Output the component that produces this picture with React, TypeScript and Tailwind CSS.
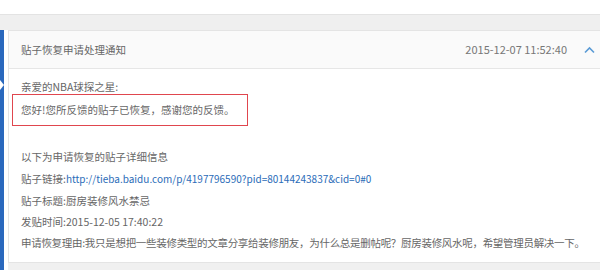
const lines = [
  { label: '贴子标题:', value: '厨房装修风水禁忌' },
  { label: '发贴时间:', value: '2015-12-05 17:40:22' },
  {
    label: '申请恢复理由:',
    value: '我只是想把一些装修类型的文章分享给装修朋友，为什么总是删帖呢？厨房装修风水呢，希望管理员解决一下。',
  },
];

const App = () => {
  return (
    <div
      className="w-[600px] h-[270px] overflow-hidden bg-[#f0f0f0] flex flex-col text-[10.5px] text-[#666]"
      style={{ fontFamily: '"Noto Sans CJK SC", "Noto Sans", sans-serif' }}
    >
      <div className="h-[14px] bg-white shrink-0"></div>
      <div className="h-[16px] bg-[#efefef] border-t border-[#e3e3e3] shrink-0"></div>

      <div className="flex flex-1 min-h-0">
        {/* blue side bar */}
        <div className="relative w-[4px] bg-[#2a68bd] shrink-0">
          <div className="absolute left-0 top-[50px] w-0 h-0 border-y-[5px] border-y-transparent border-l-[4px] border-l-white"></div>
        </div>
        <div className="w-[4px] bg-white shrink-0"></div>

        <div className="w-[597px] shrink-0 self-start bg-white border border-[#e4e4e4]">
          <div className="h-[38px] flex items-center pl-[12px] pr-[9px] bg-[#fafafa] border-b border-[#e6e6e6]">
            <span className="flex-1">贴子恢复申请处理通知</span>
            <span className="text-[#777] text-[11px]">2015-12-07 11:52:40</span>
            <svg width="11" height="8" viewBox="0 0 11 8" className="ml-[17px]">
              <path d="M1 6.5 L5.5 2 L10 6.5" fill="none" stroke="#5b9bd5" strokeWidth="1.6" />
            </svg>
          </div>

          <div className="pl-[12px] pt-[11px] pb-[8px] whitespace-nowrap">
            <div className="leading-[14px]">亲爱的NBA球探之星:</div>
            <div className="ml-[-9px] w-[236px] h-[32px] flex items-center pl-[8px] border border-[#e0464e]">
              您好!您所反馈的贴子已恢复，感谢您的反馈。
            </div>
            <div className="mt-[20px] leading-[22px]">以下为申请恢复的贴子详细信息</div>
            <div className="leading-[22px]">
              贴子链接:
              <span className="text-[#2b6cb8] text-[10px]">
                http://tieba.baidu.com/p/4197796590?pid=80144243837&amp;cid=0#0
              </span>
            </div>
            <div className="leading-[21px]">
              {lines[0].label}
              {lines[0].value}
            </div>
            <div className="leading-[21px]">
              {lines[1].label}
              {lines[1].value}
            </div>
            <div className="leading-[22px] tracking-[-0.3px]">
              {lines[2].label}
              {lines[2].value}
            </div>
          </div>
        </div>
      </div>
    </div>
  );
};

export default App;
